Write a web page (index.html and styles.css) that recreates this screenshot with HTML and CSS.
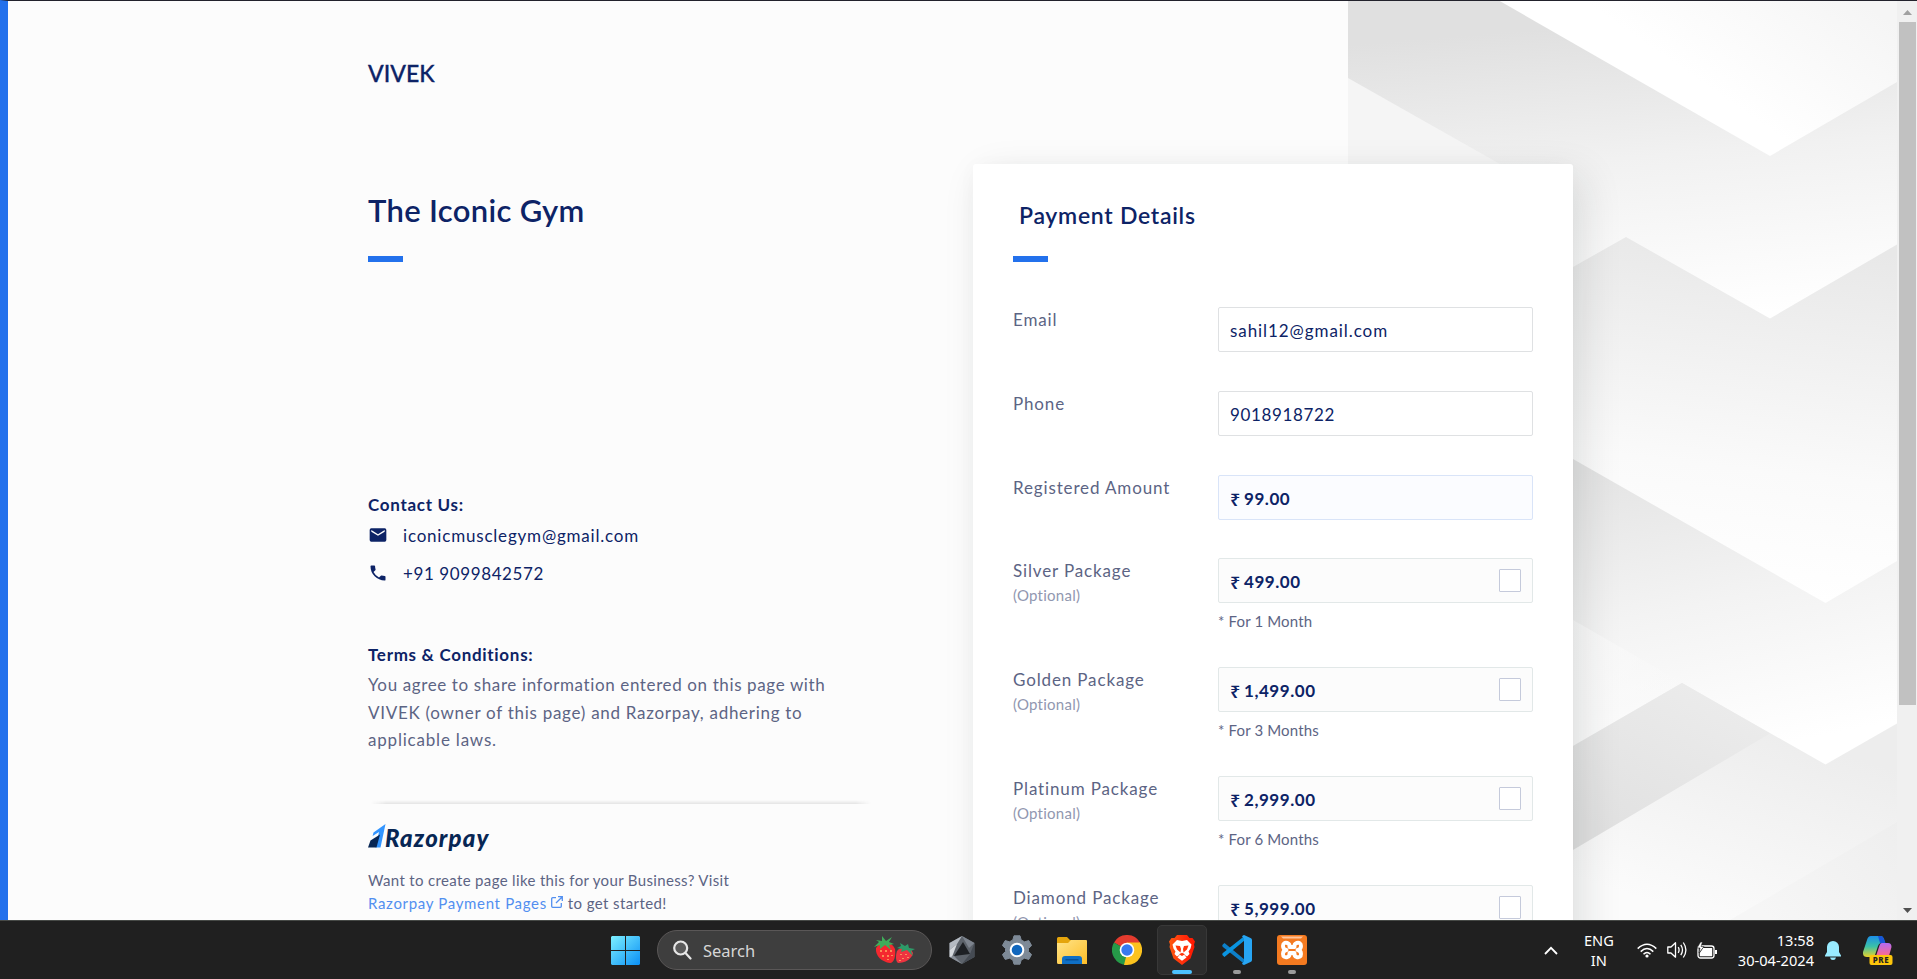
FILE: index.html
```html
<!DOCTYPE html>
<html lang="en">
<head>
<meta charset="utf-8">
<title>The Iconic Gym</title>
<link rel="stylesheet" href="styles.css">
</head>
<body>
<div class="screen">
  <div class="page">
    <svg class="backdrop" viewBox="1348 1 549 919" width="549" height="919" preserveAspectRatio="none">
      <defs>
        <linearGradient id="gb" gradientUnits="userSpaceOnUse" x1="1860" y1="0" x2="1770" y2="130"><stop offset="0" stop-color="#f5f5f5"/><stop offset="1" stop-color="#fff"/></linearGradient>
        <linearGradient id="gm" gradientUnits="userSpaceOnUse" x1="1650" y1="20" x2="1675" y2="320"><stop offset="0" stop-color="#e0e0e0"/><stop offset=".45" stop-color="#f1f1f1"/><stop offset="1" stop-color="#fff"/></linearGradient>
        <linearGradient id="gc" gradientUnits="userSpaceOnUse" x1="1760" y1="240" x2="1720" y2="590"><stop offset="0" stop-color="#e8e8e8"/><stop offset=".65" stop-color="#fafafa"/><stop offset="1" stop-color="#fff"/></linearGradient>
        <linearGradient id="gd" gradientUnits="userSpaceOnUse" x1="1640" y1="460" x2="1700" y2="760"><stop offset="0" stop-color="#e4e4e4"/><stop offset=".5" stop-color="#f3f3f3"/><stop offset="1" stop-color="#fff"/></linearGradient>
        <linearGradient id="ge" gradientUnits="userSpaceOnUse" x1="1700" y1="690" x2="1620" y2="840"><stop offset="0" stop-color="#ebebeb"/><stop offset="1" stop-color="#e1e1e1"/></linearGradient>
        <linearGradient id="gf" gradientUnits="userSpaceOnUse" x1="1800" y1="740" x2="1740" y2="930"><stop offset="0" stop-color="#ededed"/><stop offset="1" stop-color="#fbfbfb"/></linearGradient>
        <linearGradient id="gh" gradientUnits="userSpaceOnUse" x1="1897" y1="820" x2="1780" y2="930"><stop offset="0" stop-color="#eee"/><stop offset="1" stop-color="#f6f6f6"/></linearGradient>
        <linearGradient id="gi" gradientUnits="userSpaceOnUse" x1="1573" y1="700" x2="1690" y2="690"><stop offset="0" stop-color="#fafafa"/><stop offset="1" stop-color="#fafafa" stop-opacity="0"/></linearGradient>
      </defs>
      <rect x="1348" y="0" width="549" height="920" fill="url(#gm)"/>
      <path d="M1348 78L1500 164V300H1348Z" fill="#f5f5f5"/>
      <path d="M1498 0L1770 156L1897 82V0Z" fill="url(#gb)"/>
      <path d="M1573 267L1626 237L1770 318.500L1897 244.500V620H1573Z" fill="url(#gc)"/>
      <path d="M1573 459L1825.500 603L1897 561V770H1573Z" fill="url(#gd)"/>
      <path d="M1573 620L1690 687L1573 760Z" fill="url(#gi)"/>
      <path d="M1573 746L1682 683L1825.500 764.500L1897 723.500V920H1573Z" fill="url(#gf)"/>
      <path d="M1573 746L1682 683L1770 733.500L1573 850Z" fill="url(#ge)"/>
      <path d="M1897 822L1730 920H1897Z" fill="url(#gh)"/>
    </svg>
    <main class="content">
      <section class="info">
        <div class="merchant">VIVEK</div>
        <h1 class="title">The Iconic Gym</h1>
        <div class="accent"></div>
        <h2 class="subhead contact-head">Contact Us:</h2>
        <div class="contact mail">
          <svg width="20" height="20" viewBox="0 0 24 24" fill="#0d2366"><path d="M20 4H4a2 2 0 0 0-2 2v12a2 2 0 0 0 2 2h16a2 2 0 0 0 2-2V6a2 2 0 0 0-2-2zm0 4l-8 5-8-5V6l8 5 8-5z"/></svg>
          <span class="t-mail">iconicmusclegym@gmail.com</span>
        </div>
        <div class="contact phone">
          <svg width="20" height="20" viewBox="0 0 24 24" fill="#0d2366"><path d="M6.620 10.790a15.150 15.150 0 0 0 6.590 6.590l2.200-2.200a1 1 0 0 1 1.020-.24c1.120.37 2.330.57 3.570.57a1 1 0 0 1 1 1V20a1 1 0 0 1-1 1A17 17 0 0 1 3 4a1 1 0 0 1 1-1h3.500a1 1 0 0 1 1 1c0 1.250.2 2.450.57 3.570a1 1 0 0 1-.25 1.020z"/></svg>
          <span class="t-phone">+91 9099842572</span>
        </div>
        <h2 class="subhead terms-head">Terms &amp; Conditions:</h2>
        <p class="terms"><span class="l1">You agree to share information entered on this page with</span><br><span class="l2">VIVEK (owner of this page) and Razorpay, adhering to</span><br><span class="l3">applicable laws.</span></p>
        <div class="divider"></div>
        <div class="brand">
          <svg width="18" height="24" viewBox="0 0 18 24"><path d="M17.500 0L5.500 8.500L4.600 12L11 8L7.500 23.500H12.500Z" fill="#3395ff"/><path d="M2.500 16.500L0 23.500H8.500L12 10.500Z" fill="#072654"/></svg>
          <span class="brand-name">Razorpay</span>
        </div>
        <p class="promo"><span class="p1">Want to create page like this for your Business? Visit</span><br><a class="p2">Razorpay Payment Pages</a><svg class="ext" width="12" height="12" viewBox="0 0 12 12" fill="none" stroke="#528ff0" stroke-width="1.300"><path d="M5 1.700H1.700a1 1 0 0 0-1 1v7.600a1 1 0 0 0 1 1h7.600a1 1 0 0 0 1-1V7M7 .7h4.300V5M11.300.7L5 7"/></svg><span class="p3">to get started!</span></p>
      </section>
      <section class="card">
        <h2 class="card-title">Payment Details</h2>
        <div class="accent card-accent"></div>
        <div class="fields">
          <div class="row plain"><div class="label">Email</div><div class="box"><span class="v-mail">sahil12@gmail.com</span></div></div>
          <div class="row plain"><div class="label">Phone</div><div class="box"><span class="v-phone">9018918722</span></div></div>
          <div class="row plain third"><div class="label">Registered Amount</div><div class="box fixed"><b class="rs">₹</b><b class="amt">99.00</b></div></div>
          <div class="row pack"><div class="label">Silver Package<small>(Optional)</small></div><div><div class="box opt"><b class="rs">₹</b><b class="amt">499.00</b><i class="check"></i></div><div class="note">* For 1 Month</div></div></div>
          <div class="row pack"><div class="label">Golden Package<small>(Optional)</small></div><div><div class="box opt"><b class="rs">₹</b><b class="amt">1,499.00</b><i class="check"></i></div><div class="note">* For 3 Months</div></div></div>
          <div class="row pack"><div class="label">Platinum Package<small>(Optional)</small></div><div><div class="box opt"><b class="rs">₹</b><b class="amt">2,999.00</b><i class="check"></i></div><div class="note">* For 6 Months</div></div></div>
          <div class="row pack"><div class="label">Diamond Package<small>(Optional)</small></div><div><div class="box opt"><b class="rs">₹</b><b class="amt">5,999.00</b><i class="check"></i></div></div></div>
        </div>
      </section>
    </main>
    <div class="scrollbar">
      <svg width="9" height="5" viewBox="0 0 9 5"><path d="M0 5L4.500 0L9 5Z" fill="#a0a0a0"/></svg>
      <div class="thumb"></div>
      <svg class="down" width="9" height="5" viewBox="0 0 9 5"><path d="M0 0L4.500 5L9 0Z" fill="#505050"/></svg>
    </div>
  </div>
  <footer class="taskbar">
    <div class="apps">
      <svg class="win" width="29" height="29" viewBox="0 0 29 29"><defs><linearGradient id="w" x1="0" y1="0" x2="1" y2="1" ><stop offset="0" stop-color="#7df0ff"/><stop offset="1" stop-color="#0a8ff5"/></linearGradient></defs><path d="M1 0H14V14H0V1ZM15 0H28L29 1V14H15ZM0 15H14V29H1L0 28ZM15 15H29V28L28 29H15Z" fill="url(#w)"/></svg>
      <div class="search">
        <svg width="19" height="20" viewBox="0 0 19 20" fill="none" stroke="#e6e6e6" stroke-width="2.200"><circle cx="7.700" cy="8" r="6.500" fill="#5a5a5a"/><path d="M12.500 13L17.500 18.500" stroke-linecap="round"/></svg>
        <span>Search</span>
        <svg class="berries" width="42" height="28" viewBox="0 0 42 28"><path d="M2 12C6 5 17 4 21 13C22 20 20 27 16 27C8 26 1 20 2 12Z" fill="#f4282f"/><path d="M23 15C28 9 36 10 39 17C38 23 31 27 24 27C21 25 22 18 23 15Z" fill="#ee3340"/><path d="M0 11L5 6L2 4L8 5L8 0L12 5L18 1L15 6L20 8L15 9L17 14L11 9L6 13L6 9Z" fill="#3fae5a"/><path d="M23 12L27 10L26 7L31 10L34 8L35 12L41 13L37 15L39 20L33 14L27 16L28 13Z" fill="#2d9a68"/><path d="M7 14v2M12 14v2M17 14v2M9 19v2M14 19v2M18 19v1M14 23v1M27 18v1M32 18v1M29 22v1M34 21v1M26 24v1" stroke="#ffc16b" stroke-width="1.300"/></svg>
      </div>
      <svg class="hex" width="26" height="28" viewBox="0 0 26 28"><path d="M13 0L25.500 7V21L13 28L.5 21V7Z" fill="#5d636b"/><path d="M13 0L.5 7V14L8 8Z" fill="#b4bac2"/><path d="M13 0L25.500 7L20 12Z" fill="#7d848e"/><path d="M.5 14L8 8L3 21L.5 21Z" fill="#d4d8dd"/><path d="M14 6L21 18L5 20Z" fill="#1d2024"/><path d="M21 18L25.500 7V21L13 28Z" fill="#454b53"/><path d="M5 20L13 28L.5 21Z" fill="#8a9099"/></svg>
      <svg class="gear" width="30" height="30" viewBox="0 0 30 30"><path d="M12 .8H18L19.200 5L22.500 6.800L26.800 5.600L29.600 10.500L26.500 13.500V16.500L29.600 19.500L26.800 24.400L22.500 23.200L19.200 25L18 29.200H12L10.800 25L7.500 23.200L3.200 24.400L.4 19.500L3.500 16.500V13.500L.4 10.500L3.200 5.600L7.500 6.800L10.800 5Z" fill="#7e8a97" stroke="#7e8a97" stroke-linejoin="round"/><circle cx="15" cy="15" r="6.300" fill="#1167bd" stroke="#fff" stroke-width="2"/></svg>
      <svg class="folder" width="30" height="27" viewBox="0 0 30 27"><defs><linearGradient id="fo" x1="0" y1="0" x2="1" y2="1"><stop offset="0" stop-color="#ffe489"/><stop offset="1" stop-color="#fdbd27"/></linearGradient></defs><path d="M0 1.500Q0 0 1.500 0H10L13 3H22V12H0Z" fill="#e5a50c"/><path d="M0 6H11L14 3H29Q30 3 30 4V27H1.500Q0 27 0 25.500Z" fill="url(#fo)"/><path d="M5 27V22Q5 19 8 19H22Q25 19 25 22V27Z" fill="#0f6fc5"/><path d="M8.500 22.800H21.500" stroke="#074c91" stroke-width="1.300"/></svg>
      <svg class="chrome" width="30" height="30" viewBox="0 0 30 30"><path d="M15 15L2 7.500A15 15 0 0 1 28 7.500Z" fill="#e33b2e"/><path d="M15 15L28 7.500A15 15 0 0 1 15 30Z" fill="#fcc31e"/><path d="M15 15L15 30A15 15 0 0 1 2 7.500Z" fill="#269a48"/><path d="M15 7.500H28V9L20 16Z" fill="#fcc31e"/><path d="M2 7.500L8.600 19L15 22Z" fill="#269a48"/><path d="M21.500 18.700L15 30H12L14 22Z" fill="#fcc31e"/><circle cx="15" cy="15" r="7.300" fill="#fff"/><circle cx="15" cy="15" r="5.700" fill="#367af0"/></svg>
      <div class="active">
        <svg width="26" height="30" viewBox="0 0 26 30"><defs><linearGradient id="br"><stop offset="0" stop-color="#ff5a10"/><stop offset=".6" stop-color="#ff2a0a"/><stop offset="1" stop-color="#ff1600"/></linearGradient></defs><path d="M8 0H18L20.500 3L23.500 3L26 6.500L25 9.500L25.500 12L21.500 23.500L13 30L4.500 23.500L.5 12L1 9.500L0 6.500L2.500 3L5.500 3Z" fill="url(#br)"/><path d="M8 5L13 6L18 5L22.500 9.500L21.500 13.500L19.500 16.500L20.500 19L18 21.500L15 19.500L17.500 22.500L13 25.800L8.500 22.500L11 19.500L8 21.500L5.500 19L6.500 16.500L4.500 13.500L3.500 9.500Z" fill="#fff"/><path d="M6.500 10.500L11 11L12 14L11.500 17.500L8 14.500ZM19.500 10.500L15 11L14 14L14.500 17.500L18 14.500ZM10 19.200L13 17.800L16 19.200L13 21Z" fill="#ff350c"/></svg>
        <i></i>
      </div>
      <div class="tile vs"><svg width="30" height="30" viewBox="0 0 30 30"><path d="M2.500 8L22.500 24.500V29L1.200 12.200Q-.5 11 .8 9.500Z" fill="#0d7fc8"/><path d="M2.500 22L22.500 5.500V1L1.200 17.800Q-.5 19 .8 20.500Z" fill="#0a94e0"/><path d="M22 0L28.500 3Q30 3.700 30 5V25Q30 26.300 28.500 27L22 30Q20.500 29.500 20 28.500L22 26.500V3.500L20 1.500Q20.800 .3 22 0Z" fill="#27a5f3"/></svg><i></i></div>
      <div class="tile xa"><svg width="30" height="30" viewBox="0 0 30 30"><rect width="30" height="30" rx="3" fill="#f47a20"/><path d="M4 1.500H26L24 3.500H6Z" fill="#ffc39a"/><path d="M10.500 8Q6 7 6 11Q6 14.500 9.500 15Q6 15.500 6 19Q6 23 10.500 22Q13 21 12.500 18H17.500Q17 21 19.500 22Q24 23 24 19Q24 15.500 20.500 15Q24 14.500 24 11Q24 7 19.500 8Q17 9 17.500 12H12.500Q13 9 10.500 8Z" fill="none" stroke="#fff" stroke-width="3.900" stroke-linejoin="round"/></svg><i></i></div>
    </div>
    <div class="tray">
      <svg class="chev" width="14" height="9" viewBox="0 0 14 9" fill="none" stroke="#fff" stroke-width="1.800"><path d="M1 8L7 1.800L13 8"/></svg>
      <div class="lang">ENG<br>IN</div>
      <svg class="wifi" width="20" height="15" viewBox="0 0 20 15" fill="none" stroke="#fff" stroke-width="1.500"><path d="M.7 5.600Q10-3.200 19.300 5.600M3.700 8.600Q10 2.400 16.300 8.600M6.500 11.300Q10 7.800 13.500 11.300"/><circle cx="10" cy="13" r="1.600" fill="#fff" stroke="none"/></svg>
      <svg class="vol" width="20" height="18" viewBox="0 0 20 18" fill="none" stroke="#fff" stroke-width="1.300" stroke-linejoin="round"><path d="M.8 6H4L8.500 1.800V16.200L4 12H.8ZM11.200 6.200Q13 9 11.200 11.800M13.800 3.800Q17.200 9 13.800 14.200M16.300 1.500Q21.500 9 16.300 16.500"/></svg>
      <svg class="bat" width="20" height="17" viewBox="0 0 20 17"><rect x="1" y="4" width="16" height="12" rx="2.500" fill="none" stroke="#fff" stroke-width="1.300"/><path d="M6 6H15.200V14.200H2.800V11Z" fill="#fff"/><path d="M18 8H20V12H18Z" fill="#fff"/><path d="M3.500 0L0 6H3L2 11L7 4.500H4L5.500 0Z" fill="#fff" stroke="#202020" stroke-width=".6"/></svg>
      <div class="clock">13:58<br>30-04-2024</div>
      <svg class="bell" width="16" height="19" viewBox="0 0 16 19" fill="#99ebff"><path d="M8 0A6 6 0 0 1 14 6V11L16 14.500V15.500H0V14.500L2 11V6A6 6 0 0 1 8 0ZM5 16.500H11Q10.500 19 8 19Q5.500 19 5 16.500Z"/></svg>
      <svg class="copilot" width="30" height="29" viewBox="0 0 30 29"><defs><linearGradient id="c1" x1="0" y1="0" x2="0" y2="1"><stop offset="0" stop-color="#1c8fe8"/><stop offset=".5" stop-color="#3bc1a8"/><stop offset="1" stop-color="#e8d229"/></linearGradient><linearGradient id="c2" x1="0" y1="0" x2="0" y2="1"><stop offset="0" stop-color="#b36bf2"/><stop offset="1" stop-color="#ff6a8a"/></linearGradient></defs><path d="M8 0H18Q20 0 21 3L22 7H19Q16 7 15 10L12 19Q11 21 8 21H4Q-.5 21 0 16L4 4Q5 0 8 0Z" fill="url(#c1)"/><path d="M15 0H18Q20 0 21 3L22.500 7H17Z" fill="#1756d8"/><path d="M19 7H25Q28.500 7 28.500 11L26 20H13L16 11Q17 7 19 7Z" fill="url(#c2)"/><rect x="6.500" y="19" width="23" height="10" rx="2" fill="#fdc50b"/><text x="18" y="27.200" text-anchor="middle" class="pre">PRE</text></svg>
    </div>
  </footer>
</div>
</body>
</html>
```
FILE: styles.css
```css
* { box-sizing: border-box; }
body { margin: 0; overflow: hidden; font-family: Lato, "Noto Sans", sans-serif; color: #0d2366; }
h1, h2, p { margin: 0; }
svg { flex: none; display: block; }
span, b { white-space: nowrap; }
.screen { width: 1917px; height: 979px; display: flex; flex-direction: column; overflow: hidden; }
.page { position: relative; height: 920px; display: flex; justify-content: space-between; overflow: hidden; background: #fcfcfc; border-top: 1px solid #22222c; border-left: 8px solid #2371ec; }
.backdrop { position: absolute; right: 20px; top: 0; }
.content { position: relative; display: flex; padding-left: 360px; }
.info { width: 605px; padding-top: 56px; }
.merchant { font-size: 23px; line-height: 32px; font-weight: 500; -webkit-text-stroke: .3px; }
.title { font-size: 31px; line-height: 40px; margin-top: 101px; font-weight: 600; letter-spacing: .32px; }
.accent { width: 35px; height: 6px; background: #2371ec; margin-top: 26px; }
.subhead { font-size: 17px; line-height: 24px; font-weight: 700; letter-spacing: .7px; }
.contact-head { margin-top: 231px; }
.contact { display: flex; align-items: center; gap: 15px; height: 24px; font-size: 17px; }
.mail { margin-top: 6px; }
.phone { margin-top: 14px; }
.t-mail { letter-spacing: .8px; }
.t-phone { letter-spacing: .6px; }
.terms-head { margin-top: 58px; }
.terms { font-size: 17px; line-height: 27.500px; margin-top: 4px; color: #5c6484; }
.l1 { letter-spacing: .62px; }
.l2 { letter-spacing: .72px; }
.l3 { letter-spacing: .8px; }
.divider { width: 500px; height: 4px; margin: 46px 0 0 3px; background: linear-gradient(#fcfcfc, #e4e4e4); -webkit-mask-image: linear-gradient(90deg, transparent, #000 3%, #000 97%, transparent); mask-image: linear-gradient(90deg, transparent, #000 3%, #000 97%, transparent); }
.brand { display: flex; height: 32px; margin-top: 20px; }
.brand-name { font-size: 24px; line-height: 27px; font-weight: 900; font-style: italic; color: #072654; margin-left: -1px; letter-spacing: 1.1px; }
.promo { font-size: 15px; line-height: 23px; color: #5c6484; margin-top: 13px; }
.promo a { color: #528ff0; }
.p1 { letter-spacing: .34px; }
.p2 { letter-spacing: .67px; }
.p3 { letter-spacing: .4px; }
.ext { display: inline-block; margin: 0 5px 1px 4px; }
.card { width: 600px; height: 1000px; margin-top: 163px; padding: 35px 40px; border-radius: 3px; background: #fff; box-shadow: 10px 12px 40px rgba(23, 31, 37, .12), -2px 0 20px rgba(23, 31, 37, .02); }
.card-title { font-size: 23px; line-height: 32px; margin-left: 6px; font-weight: 600; letter-spacing: .72px; }
.card-accent { margin-top: 25px; }
.fields { margin-top: 45px; }
.row { display: grid; grid-template-columns: 205px 315px; }
.plain { height: 84px; }
.third { height: 83px; }
.pack { height: 109px; }
.label { padding-top: 1px; font-size: 17px; line-height: 24px; color: #5c6484; letter-spacing: .86px; }
.label small { display: block; font-size: 15px; line-height: 24px; color: #9197b0; letter-spacing: .25px; }
.box { display: flex; align-items: center; height: 45px; padding: 2px 11px 0; font-size: 17px; border: 1px solid #dfe1e3; border-radius: 2px; }
.v-mail { letter-spacing: .93px; }
.v-phone { letter-spacing: .65px; }
.fixed { background: #fbfcff; border-color: #d9e4f8; }
.opt { background: #fcfcfc; border-color: #e2e8e8; }
.rs { font-family: "Noto Sans", sans-serif; width: 14px; font-size: 18px; font-weight: 600; }
.amt { letter-spacing: .55px; }
.check { width: 22px; height: 23px; margin: -3px 0 0 auto; border: 1px solid #c5cadb; background: #fff; border-radius: 1px; }
.note { font-size: 15px; line-height: 20px; margin-top: 8px; color: #5c6484; letter-spacing: .15px; }
.scrollbar { position: relative; width: 20px; display: flex; flex-direction: column; align-items: center; padding: 9px 0 7px; background: #f0f0f0; }
.thumb { width: 17px; height: 683px; margin-top: 7px; background: #c1c1c1; }
.down { margin-top: auto; }
.taskbar { display: flex; justify-content: space-between; height: 59px; background: #202020; border-top: 1px solid #464946; padding: 0 24px 0 611px; font-family: "Noto Sans", "Open Sans", sans-serif; color: #fff; }
.apps, .tray { display: flex; align-items: center; }
.search { display: flex; align-items: center; width: 275px; height: 40px; margin-left: 17px; padding: 0 15px; border-radius: 20px; background: #3e3e3e; border: 1px solid #5a5757; font-size: 16.500px; color: #d6d6d6; }
.search span { margin-left: 11px; }
.berries { margin-left: auto; }
.hex { margin-left: 17px; }
.gear { margin-left: 27px; }
.folder, .chrome { margin-left: 25px; }
.active { position: relative; width: 50px; height: 50px; margin-left: 15px; border: 1px solid #383838; border-radius: 5px; background: #2c2c2c; display: flex; flex-direction: column; align-items: center; padding-top: 9px; }
.active i { width: 20px; height: 4px; margin-top: 5px; border-radius: 2px; background: #4cc2ff; }
.tile { height: 50px; display: flex; flex-direction: column; align-items: center; padding-top: 10px; }
.tile i { width: 8px; height: 4px; margin-top: 5px; border-radius: 2px; background: #9a9a9a; }
.vs { margin-left: 15px; }
.xa { margin-left: 25px; }
.lang, .clock { font-size: 14.600px; line-height: 20px; }
.lang { text-align: center; margin-left: 26px; }
.wifi { margin-left: 23px; }
.vol, .bat { margin-left: 10px; }
.clock { text-align: right; margin-left: 21px; }
.bell { margin-left: 11px; }
.copilot { margin-left: 22px; }
.pre { font: 800 8px "Noto Sans", sans-serif; fill: #222; letter-spacing: .5px; }
```
